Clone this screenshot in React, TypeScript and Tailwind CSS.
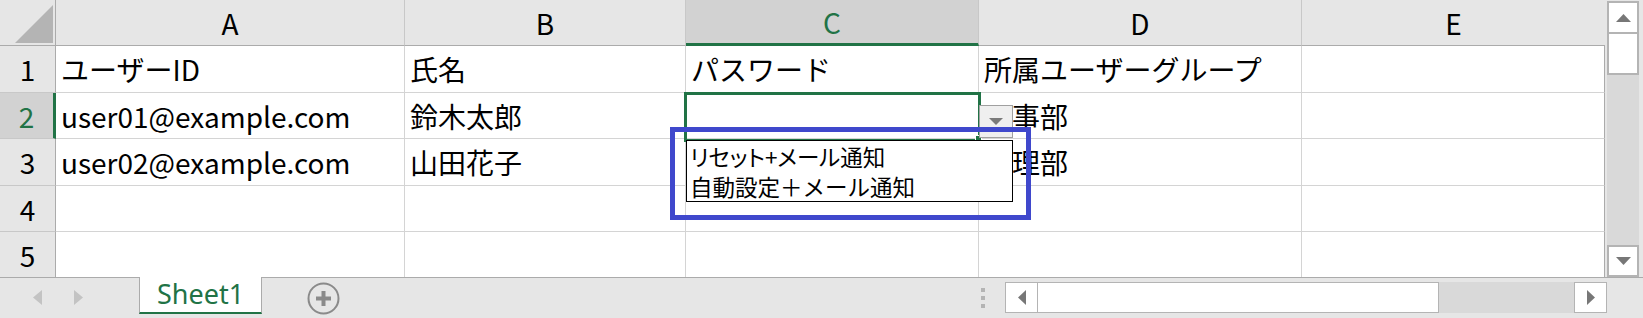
const cols = [
  { key: 'A', w: 349 },
  { key: 'B', w: 281 },
  { key: 'C', w: 293 },
  { key: 'D', w: 323 },
  { key: 'E', w: 303 },
];

const rows = [
  ['ユーザーID', '氏名', 'パスワード', '所属ユーザーグループ', ''],
  ['user01@example.com', '鈴木太郎', '', '人事部', ''],
  ['user02@example.com', '山田花子', '', '経理部', ''],
  ['', '', '', '', ''],
  ['', '', '', '', ''],
];

const Corner = () => (
  <div className="border-r border-b border-[#ababab] bg-[#e6e6e6]">
    <svg width="55" height="45" viewBox="0 0 55 45">
      <polygon points="15,43 53,43 53,5" fill="#b4b4b4" />
    </svg>
  </div>
);

const ColHeader = ({ label, active, last }) => (
  <div
    className={
      'flex items-center justify-center border-b text-[28px] ' +
      (last ? '' : 'border-r border-r-[#c8c8c8] ') +
      (active
        ? 'bg-[#d2d2d2] text-[#217346] border-b-[3px] border-b-[#217346]'
        : 'bg-[#e6e6e6] text-black border-b-[#ababab]')
    }
  >
    {label}
  </div>
);

const RowHeader = ({ n, active, last }) => (
  <div
    className={
      'flex items-center justify-center text-[28px] ' +
      (last ? '' : 'border-b border-b-[#c8c8c8] ') +
      (active
        ? 'bg-[#d2d2d2] text-[#217346] border-r-[3px] border-r-[#217346]'
        : 'bg-[#e6e6e6] text-black border-r border-r-[#ababab]')
    }
  >
    {n}
  </div>
);

const Cell = ({ text, lastCol, lastRow }) => (
  <div
    className={
      'flex items-center overflow-hidden whitespace-nowrap bg-white pl-[5px] text-[28px] text-black ' +
      (lastRow ? '' : 'border-b border-b-[#d4d4d4] ') +
      (lastCol ? 'border-r border-r-[#ababab]' : 'border-r border-r-[#d4d4d4]')
    }
  >
    {text}
  </div>
);

const VScrollBar = () => (
  <div className="flex w-[38px] flex-col bg-[#e6e6e6] pl-[2px] pr-[4px]">
    <div className="mt-[1px] flex h-[33px] items-center justify-center border-2 border-[#b4b4b4] bg-white">
      <svg width="15" height="8" viewBox="0 0 15 8">
        <polygon points="0,8 15,8 7.5,0" fill="#777" />
      </svg>
    </div>
    <div className="h-[41px] border-2 border-t-0 border-[#b4b4b4] bg-white" />
    <div className="flex-1 bg-[#d9d9d9]" />
    <div className="flex h-[32px] items-center justify-center border-2 border-[#b4b4b4] bg-white">
      <svg width="15" height="8" viewBox="0 0 15 8">
        <polygon points="0,0 15,0 7.5,8" fill="#777" />
      </svg>
    </div>
  </div>
);

const BottomBar = () => (
  <div className="flex h-[41px] items-start border-t border-[#ababab] bg-[#e6e6e6]">
    <div className="flex w-[139px] items-center pt-[12px]">
      <svg className="ml-[33px]" width="9" height="15" viewBox="0 0 9 15">
        <polygon points="9,0 9,15 0,7.5" fill="#c3c3c3" />
      </svg>
      <svg className="ml-[32px]" width="9" height="15" viewBox="0 0 9 15">
        <polygon points="0,0 0,15 9,7.5" fill="#c3c3c3" />
      </svg>
    </div>
    <div className="-mt-[1px] flex h-[37px] w-[123px] items-center justify-center border-x border-b-2 border-x-[#ababab] border-b-[#217346] bg-white pb-[2px] font-['Noto_Sans',sans-serif] text-[27px] text-[#217346]">
      Sheet1
    </div>
    <svg className="ml-[45px] mt-[4px]" width="33" height="33" viewBox="0 0 33 33">
      <circle cx="16.5" cy="16.5" r="15" fill="none" stroke="#8a8a8a" strokeWidth="2" />
      <rect x="9" y="14.5" width="15" height="4" fill="#8a8a8a" />
      <rect x="14.5" y="9" width="4" height="15" fill="#8a8a8a" />
    </svg>
    <div className="ml-[641px] mt-[10px] flex flex-col gap-[4px]">
      <div className="h-[4px] w-[4px] bg-[#b4b4b4]" />
      <div className="h-[4px] w-[4px] bg-[#b4b4b4]" />
      <div className="h-[4px] w-[4px] bg-[#b4b4b4]" />
    </div>
    <div className="ml-[20px] mt-[4px] flex h-[31px] w-[602px]">
      <div className="flex w-[33px] items-center justify-center border border-[#b4b4b4] bg-white">
        <svg width="8" height="15" viewBox="0 0 8 15">
          <polygon points="8,0 8,15 0,7.5" fill="#777" />
        </svg>
      </div>
      <div className="w-[401px] border border-l-0 border-[#b4b4b4] bg-white" />
      <div className="flex-1 bg-[#d9d9d9]" />
      <div className="flex w-[33px] items-center justify-center border border-[#b4b4b4] bg-white">
        <svg width="8" height="15" viewBox="0 0 8 15">
          <polygon points="0,0 0,15 8,7.5" fill="#777" />
        </svg>
      </div>
    </div>
  </div>
);

export default function App() {
  return (
    <div className="relative h-[318px] w-[1643px] overflow-hidden bg-[#e6e6e6] font-['Noto_Sans_CJK_JP','Noto_Sans',sans-serif] leading-none">
      <div className="flex h-[277px]">
        <div className="grid w-[1605px] grid-cols-[56px_349px_281px_293px_323px_303px] grid-rows-[46px_47px_46px_47px_46px_45px]">
          <Corner />
          {cols.map((c, i) => (
            <ColHeader key={c.key} label={c.key} active={c.key === 'C'} last={i === cols.length - 1} />
          ))}
          {rows.map((r, ri) => (
            <>
              <RowHeader key={'h' + ri} n={ri + 1} active={ri === 1} last={ri === rows.length - 1} />
              {r.map((t, ci) => (
                <Cell
                  key={ri + '-' + ci}
                  text={t}
                  lastCol={ci === r.length - 1}
                  lastRow={ri === rows.length - 1}
                />
              ))}
            </>
          ))}
        </div>
        <VScrollBar />
      </div>
      <BottomBar />

      {/* active cell C2 */}
      <div className="absolute left-[684px] top-[92px] h-[50px] w-[297px] border-[3px] border-[#217346]" />
      <div className="absolute left-[975px] top-[135px] h-[7px] w-[7px] border border-white bg-[#217346]" />

      {/* validation dropdown */}
      <div className="absolute left-[979px] top-[105px] flex h-[33px] w-[34px] items-center justify-center border border-[#a0a0a0] bg-[#efefef]">
        <svg width="14" height="7" viewBox="0 0 14 7">
          <polygon points="0,0 14,0 7,7" fill="#7a7a7a" />
        </svg>
      </div>
      <div className="absolute left-[686px] top-[140px] h-[62px] w-[327px] border border-black bg-white pl-[3px] text-[22.5px] leading-[30px] text-black">
        <div className="[font-feature-settings:'palt']">リセット+メール通知</div>
        <div>自動設定＋メール通知</div>
      </div>

      {/* annotation box */}
      <div className="absolute left-[670px] top-[127px] h-[93px] w-[361px] border-[5px] border-[#3f48cc]" />
    </div>
  );
}
